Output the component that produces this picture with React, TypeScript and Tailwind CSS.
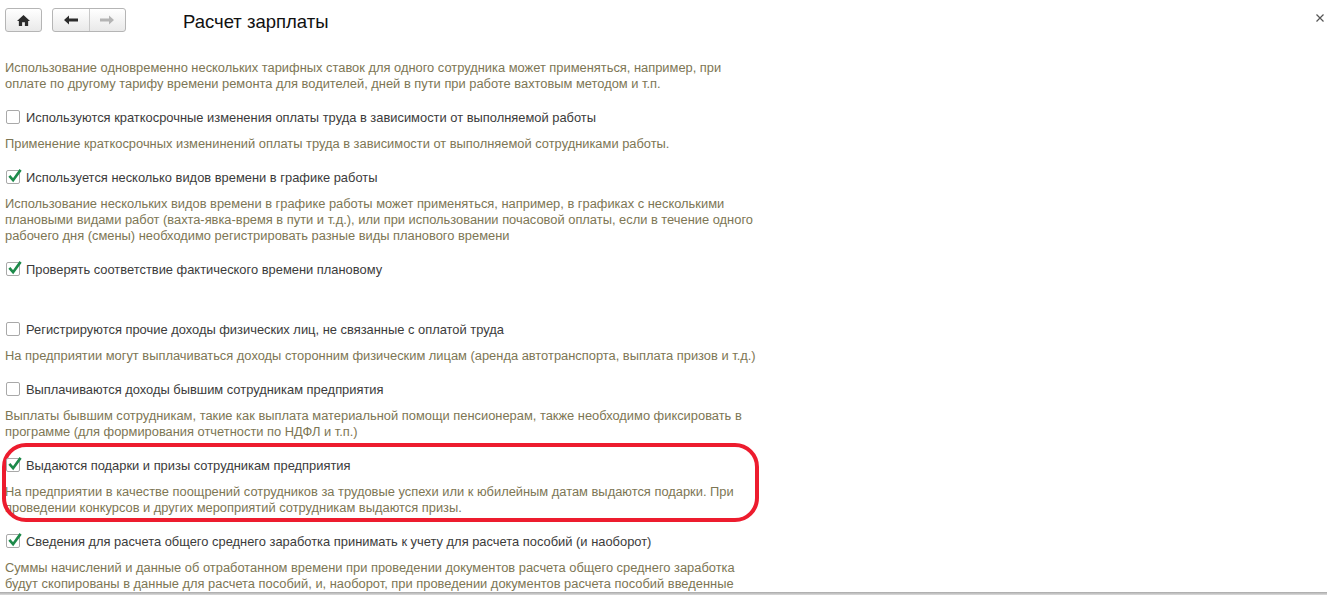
import React from "react";

type Item = {
  label: string;
  checked: boolean;
  lines: string[];
  circled?: boolean;
  extra?: boolean;
};

const items: Item[] = [
  {
    label: "Используются краткосрочные изменения оплаты труда в зависимости от выполняемой работы",
    checked: false,
    lines: ["Применение краткосрочных изменинений оплаты труда в зависимости от выполняемой сотрудниками работы."],
  },
  {
    label: "Используется несколько видов времени в графике работы",
    checked: true,
    lines: [
      "Использование нескольких видов времени в графике работы может применяться, например, в графиках с несколькими",
      "плановыми видами работ (вахта-явка-время в пути и т.д.), или при использовании почасовой оплаты, если в течение одного",
      "рабочего дня (смены) необходимо регистрировать разные виды планового времени",
    ],
  },
  {
    label: "Проверять соответствие фактического времени плановому",
    checked: true,
    lines: [],
    extra: true,
  },
  {
    label: "Регистрируются прочие доходы физических лиц, не связанные с оплатой труда",
    checked: false,
    lines: ["На предприятии могут выплачиваться доходы сторонним физическим лицам (аренда автотранспорта, выплата призов и т.д.)"],
  },
  {
    label: "Выплачиваются доходы бывшим сотрудникам предприятия",
    checked: false,
    lines: [
      "Выплаты бывшим сотрудникам, такие как выплата материальной помощи пенсионерам, также необходимо фиксировать в",
      "программе (для формирования отчетности по НДФЛ и т.п.)",
    ],
  },
  {
    label: "Выдаются подарки и призы сотрудникам предприятия",
    checked: true,
    circled: true,
    lines: [
      "На предприятии в качестве поощрений сотрудников за трудовые успехи или к юбилейным датам выдаются подарки. При",
      "проведении конкурсов и других мероприятий сотрудникам выдаются призы.",
    ],
  },
  {
    label: "Сведения для расчета общего среднего заработка принимать к учету для расчета пособий (и наоборот)",
    checked: true,
    lines: [
      "Суммы начислений и данные об отработанном времени при проведении документов расчета общего среднего заработка",
      "будут скопированы в данные для расчета пособий, и, наоборот, при проведении документов расчета пособий введенные",
    ],
  },
];

function Description({ lines }: { lines: string[] }) {
  return (
    <div className="text-[12.88px] leading-4 text-[#7d7654] whitespace-nowrap">
      {lines.map((line) => (
        <div key={line}>{line}</div>
      ))}
    </div>
  );
}

function CheckRow({ item }: { item: Item }) {
  return (
    <div className="relative">
      {item.circled && (
        <div className="absolute top-[-13px] left-[-3px] w-[757px] h-[79px] border-[4px] border-[#ed1c2e] rounded-[24px]" />
      )}
      <div className="flex items-center h-5 gap-[6px] pl-px">
        <div className="relative w-[14px] h-[14px] mb-[2px] border border-[#a9a9a9] rounded-[2px] bg-white shrink-0">
          {item.checked && (
            <svg viewBox="0 0 16 16" className="absolute left-0 top-[-3px] w-[15px] h-[15px]">
              <path d="M2.5 8.5 L6.5 13 L14.5 2" fill="none" stroke="#1d8a4a" strokeWidth="2.8" />
            </svg>
          )}
        </div>
        <span className="text-[12.9px] text-[#3b3b3b] whitespace-nowrap">{item.label}</span>
      </div>
      {item.lines.length > 0 && (
        <div className="mt-2">
          <Description lines={item.lines} />
        </div>
      )}
      {item.extra && <div className="h-6" />}
    </div>
  );
}

export default function App() {
  return (
    <div className="relative w-[1327px] h-[595px] overflow-hidden bg-white font-['Liberation_Sans',Arial,sans-serif]">
      <div className="flex items-center h-6 mt-2 pl-[5px]">
        <button className="flex items-center justify-center w-[37px] h-6 rounded-[3px] border border-[#b5b5b5] bg-gradient-to-b from-white to-[#e9e9e9]">
          <svg viewBox="0 0 16 14" className="w-[15px] h-[13px]">
            <path d="M8 1 L15 7.5 L13 7.5 L13 13 L9.5 13 L9.5 9 L6.5 9 L6.5 13 L3 13 L3 7.5 L1 7.5 Z" fill="#2b2b2b" />
          </svg>
        </button>
        <div className="flex ml-[10px] w-[74px] h-6 rounded-[3px] border border-[#b5b5b5] bg-gradient-to-b from-white to-[#e9e9e9]">
          <div className="flex flex-1 items-center justify-center border-r border-[#c8c8c8]">
            <svg viewBox="0 0 14 10" className="w-[14px] h-[10px]">
              <path d="M0 5 L5 0.5 L5 3.5 L14 3.5 L14 6.5 L5 6.5 L5 9.5 Z" fill="#2b2b2b" />
            </svg>
          </div>
          <div className="flex flex-1 items-center justify-center">
            <svg viewBox="0 0 14 10" className="w-[14px] h-[10px]">
              <path d="M14 5 L9 0.5 L9 3.5 L0 3.5 L0 6.5 L9 6.5 L9 9.5 Z" fill="#b4b4b4" />
            </svg>
          </div>
        </div>
        <h1 className="ml-[57px] text-[18.5px] leading-6 pt-[4px] text-[#111]">Расчет зарплаты</h1>
        <svg viewBox="0 0 8 8" className="absolute right-[3px] top-[14px] w-2 h-2">
          <path d="M0.5 0.5 L7.5 7.5 M7.5 0.5 L0.5 7.5" stroke="#555" strokeWidth="1.2" />
        </svg>
      </div>

      <div className="flex flex-col gap-4 pl-[5px] pt-[28px]">
        <Description
          lines={[
            "Использование одновременно нескольких тарифных ставок для одного сотрудника может применяться, например, при",
            "оплате по другому тарифу времени ремонта для водителей, дней в пути при работе вахтовым методом и т.п.",
          ]}
        />
        {items.map((item) => (
          <CheckRow key={item.label} item={item} />
        ))}
      </div>

      <div className="absolute inset-x-0 bottom-0 h-[3px] bg-gradient-to-b from-[#a8a8a8] to-[#dcdcdc]" />
    </div>
  );
}
